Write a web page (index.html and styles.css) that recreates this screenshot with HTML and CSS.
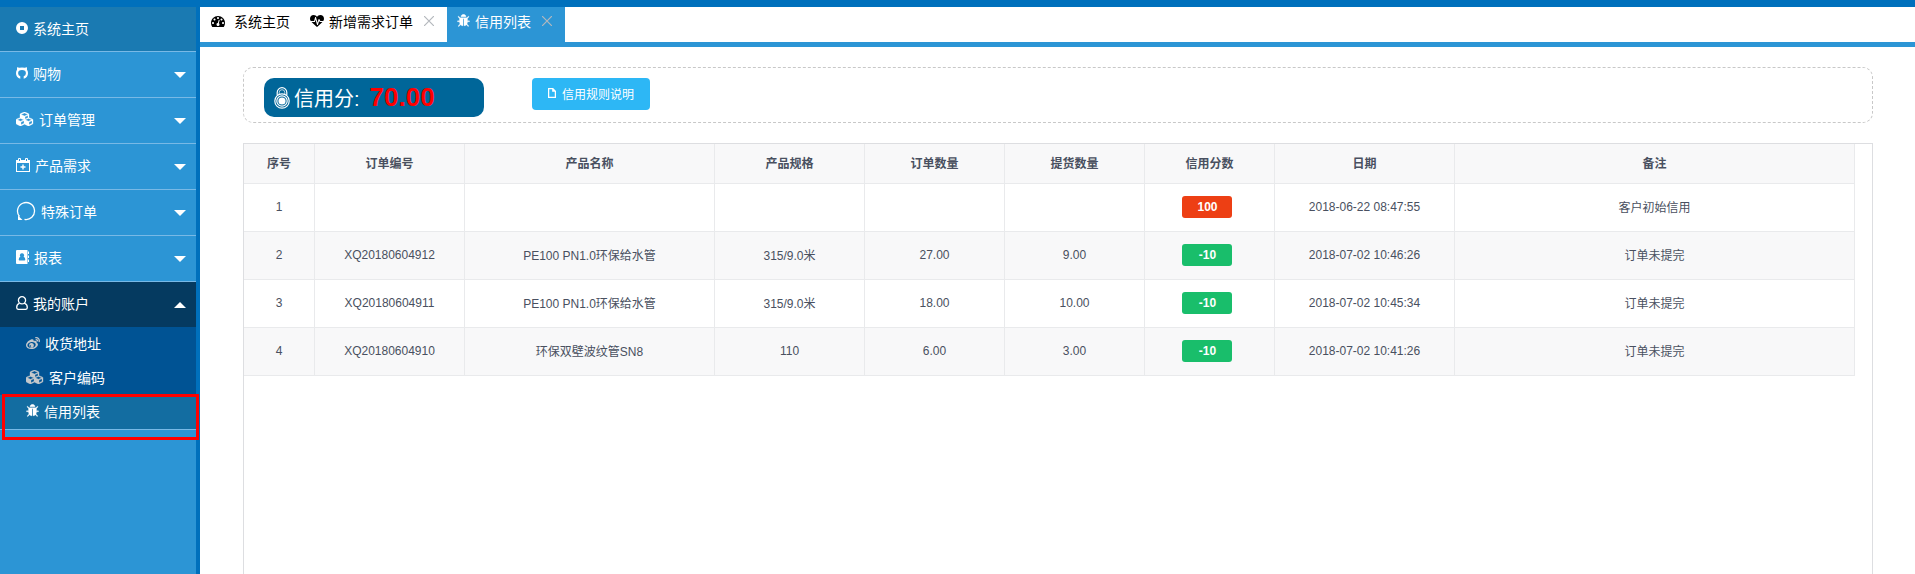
FILE: index.html
```html
<!DOCTYPE html>
<html lang="zh-CN">
<head>
<meta charset="utf-8">
<title>信用列表</title>
<link rel="stylesheet" href="styles.css">
</head>
<body>
<svg class="defs" aria-hidden="true">
  <symbol id="cubes" viewBox="0 0 2304 1792"><path class="heavy" d="M640 1632l384-192v-314l-384 164v342zm-64-454l404-173-404-173-404 173zm1088 454l384-192v-314l-384 164v342zm-64-454l404-173-404-173-404 173zm-448-293l384-165v-266l-384 164v267zm-64-379l441-189-441-189-441 189zm1088 518v416q0 36-19 67t-52 47l-448 224q-25 14-57 14t-57-14l-448-224q-5-2-7-4-2 2-7 4l-448 224q-25 14-57 14t-57-14l-448-224q-33-16-52-47t-19-67v-416q0-38 21.5-70t56.5-48l434-186v-400q0-38 21.5-70t56.5-48l448-192q23-10 50-10t50 10l448 192q35 16 56.5 48t21.5 70v400l434 186q36 16 57 48t21 70z"/></symbol>
  <symbol id="bug" viewBox="64 64 1664 1728"><path class="heavy" d="M1696 960q0 26-19 45t-45 19h-224q0 171-67 290l208 209q19 19 19 45t-19 45q-18 19-45 19t-45-19l-198-197q-5 5-15 13t-42 28.5-65 36.5-82 29-97 13v-896h-128v896q-51 0-101.5-13.5t-87-33-66-39-43.5-32.5l-15-14-183 207q-20 21-48 21-24 0-43-16-19-18-20.500-44.500t15.500-46.500l202-227q-58-114-58-274h-224q-26 0-45-19t-19-45 19-45 45-19h224v-294l-173-173q-19-19-19-45t19-45 45-19 45 19l173 173h844l173-173q19-19 45-19t45 19 19 45-19 45l-173 173v294h224q26 0 45 19t19 45zm-480-576h-640q0-133 93.500-226.500t226.500-93.500 226.500 93.500 93.500 226.500z"/></symbol>
</svg>
<div class="app">
  <nav class="sidebar">
    <ul class="menu">
      <li class="menu-row"><a class="menu-item current" href="#">
        <svg class="i12" viewBox="0 0 12 12"><path fill-rule="evenodd" d="M6 0a6 6 0 1 0 0 12A6 6 0 0 0 6 0zM4 4h4v4H4z"/></svg>系统主页</a></li>
      <li class="menu-row"><button class="menu-item">
        <svg class="i12" viewBox="0 0 12 12"><path d="M1 .2 3.300.8Q6 0 8.700.8L11 .2V2.700A6 6 0 0 1 12 6 6 6 0 0 1 7.700 11.800V9.300Q9.900 8.500 9.900 6.200 9.900 2.900 6 2.900T2.100 6.200Q2.100 8.500 4.300 9.300V11.800A6 6 0 0 1 0 6 6 6 0 0 1 1 2.700z"/></svg>购物<span class="caret"></span></button></li>
      <li class="menu-row"><button class="menu-item"><svg class="i18"><use href="#cubes"/></svg>订单管理<span class="caret"></span></button></li>
      <li class="menu-row"><button class="menu-item">
        <svg class="i14" viewBox="0 0 14 14"><path fill-rule="evenodd" d="M0 2h2V1q0-1 1-1h1q1 0 1 1v1h4V1q0-1 1-1h1q1 0 1 1v1h2v12H0zM1 5v8h12V5zM3 1v2h1V1zm7 0v2h1V1zM6.300 6.500h1.400V8.300h1.800v1.400H7.700v1.800H6.300V9.700H4.500V8.300h1.800z"/></svg>产品需求<span class="caret"></span></button></li>
      <li class="menu-row"><button class="menu-item">
        <svg class="i20" viewBox="0 0 20 20"><path class="line" d="M8.500 18.400A8.500 8.500 0 1 0 3.500 15.500"/><path d="M2 14.500 6.500 19H2z"/></svg>特殊订单<span class="caret"></span></button></li>
      <li class="menu-row"><button class="menu-item">
        <svg class="i13" viewBox="0 0 13 14"><path fill-rule="evenodd" d="M1 0h10.500v14H1Q0 14 0 13V1Q0 0 1 0zM6 3.200a2.100 2.100 0 0 0-1.600 3.500Q2.700 7.200 2.700 9.500q0 .9.800.9h5q.8 0 .8-.9 0-2.300-1.700-2.800A2.100 2.100 0 0 0 6 3.200zM12 1.500h1.500V4H12zm0 4h1.500V8H12zm0 4h1.500V12H12z"/></svg>报表<span class="caret"></span></button></li>
      <li class="menu-row open"><button class="menu-item dark" aria-expanded="true">
        <svg class="i12" viewBox="0 0 12 14"><path class="line" d="M3.300 7.300C1.400 7.900.7 9.500.7 11.400c0 1.300.8 2 2 2h6.600c1.200 0 2-.7 2-2 0-1.900-.7-3.500-2.600-4.100M6 .7a3.500 3.500 0 1 1 0 7.200A3.500 3.500 0 0 1 6 .7z"/></svg>我的账户<span class="caret up"></span></button>
        <ul class="submenu">
          <li><a class="sub-item" href="#"><svg class="i14" viewBox="0 0 14 12"><path fill-rule="evenodd" d="M5 2.500C7 1.600 8 2.600 7.600 4c2-.8 3.700-.1 3 1.700 1.500.5 1.800 2 .7 3.500C9.800 11.200 7.600 12 5.400 12 2 12 0 10.400 0 8.300 0 6 2.700 3.400 5 2.500zM5.400 5C3 5.200 1.300 6.700 1.400 8.400s2 2.700 4.400 2.500 4-1.800 3.900-3.500S7.800 4.800 5.400 5zM5 6a2.400 2.400 0 1 1-.1 4.700A2.400 2.400 0 0 1 5 6zm-.7 2.200a.8.8 0 1 0 .1 1.600.8.8 0 0 0-.1-1.600z"/><path class="line" d="M9.300.7c2.700-.5 4.600 1.600 3.800 4.300M9.700 2.600c1.300-.2 2 .6 1.700 1.800"/></svg>收货地址</a></li>
          <li><a class="sub-item" href="#"><svg class="i18"><use href="#cubes"/></svg>客户编码</a></li>
          <li class="marked"><a class="sub-item selected" href="#"><svg class="i13"><use href="#bug"/></svg>信用列表</a></li>
        </ul>
      </li>
    </ul>
  </nav>
  <main class="main">
    <div class="tabs">
      <div class="tab home"><svg class="i14" viewBox="0 128 1792 1536"><path d="M384 1152q0-53-37.500-90.500t-90.500-37.500-90.500 37.500-37.500 90.500 37.500 90.500 90.500 37.500 90.500-37.500 37.500-90.500zm192-448q0-53-37.500-90.500t-90.500-37.500-90.500 37.500-37.500 90.500 37.500 90.500 90.500 37.500 90.500-37.500 37.500-90.500zm428 481l101-382q6-26-7.500-48.500t-38.500-29.500-48 6.500-30 39.500l-101 382q-60 5-107 43.500t-63 98.500q-20 77 20 146t117 89 146-20 89-117q16-60-6-117t-72-91zm660-33q0-53-37.500-90.500t-90.500-37.500-90.500 37.500-37.500 90.500 37.500 90.500 90.500 37.500 90.500-37.500 37.500-90.500zm-640-640q0-53-37.500-90.500t-90.500-37.500-90.500 37.500-37.500 90.500 37.500 90.500 90.500 37.500 90.500-37.500 37.500-90.500zm448 192q0-53-37.500-90.500t-90.500-37.500-90.500 37.500-37.500 90.500 37.500 90.500 90.500 37.500 90.500-37.500 37.500-90.500zm320 448q0 261-141 483-19 29-54 29h-1402q-35 0-54-29-141-221-141-483 0-182 71-348t191-286 286-191 348-71 348 71 286 191 191 286 71 348z"/></svg><a href="#">系统主页</a></div>
      <div class="tab"><svg class="i14" viewBox="0 0 1792 1792"><path d="M1280 1024h305q-5 6-10 10.500t-9 7.500l-3 4-623 600q-18 18-44 18t-44-18l-624-602q-5-2-21-20h369q22 0 39.500-13.500t22.500-34.500l70-281 190 667q6 20 23 33t39 13q21 0 38-13t23-33l146-485 56 112q18 35 57 35zm512-428q0 145-103 300h-369l-111-221q-8-17-25.500-27t-36.500-8q-45 5-56 46l-129 430-196-686q-6-20-23.500-33t-39.500-13-39 13.500-22 34.500l-116 464h-423q-103-155-103-300 0-220 127-344t351-124q62 0 126.500 21.500t120 58 95.500 68.500 76 68q36-36 76-68t95.500-68.500 120-58 126.500-21.500q224 0 351 124t127 344z"/></svg><a href="#">新增需求订单</a><button class="close" aria-label="关闭"><svg viewBox="0 0 10 10"><path class="thin" d="M0 0l10 10M10 0L0 10"/></svg></button></div>
      <div class="tab active"><svg class="i13"><use href="#bug"/></svg><a href="#">信用列表</a><button class="close" aria-label="关闭"><svg viewBox="0 0 10 10"><path class="thin" d="M0 0l10 10M10 0L0 10"/></svg></button></div>
    </div>
    <div class="page">
      <section class="summary">
        <div class="score">
          <svg class="lock" viewBox="0 0 16 22"><path class="ring" d="M3.200 8V5.500a4.800 4.800 0 0 1 9.600 0V8"/><path class="ring faint" d="M5.200 7V5.500a2.800 2.800 0 0 1 5.600 0V7"/><circle class="ring" cx="8" cy="14" r="7.200"/><circle class="ring" cx="8" cy="14" r="5.200"/><circle cx="8" cy="14" r="3.600"/></svg>
          <span>信用分:</span><strong>70.00</strong>
        </div>
        <button class="rules"><svg viewBox="0 0 8 10"><path class="line" d="M.6.6h4.200l2.600 2.600v6.200H.6zM4.800.6v2.600h2.600"/></svg>信用规则说明</button>
      </section>
      <section class="panel">
        <table>
          <colgroup><col class="w71"><col class="w150"><col class="w250"><col class="w150"><col class="w140"><col class="w140"><col class="w130"><col class="w180"><col></colgroup>
          <thead><tr><th>序号</th><th>订单编号</th><th>产品名称</th><th>产品规格</th><th>订单数量</th><th>提货数量</th><th>信用分数</th><th>日期</th><th>备注</th></tr></thead>
          <tbody>
            <tr><td>1</td><td></td><td></td><td></td><td></td><td></td><td><span class="badge red">100</span></td><td>2018-06-22 08:47:55</td><td>客户初始信用</td></tr>
            <tr><td>2</td><td>XQ20180604912</td><td>PE100 PN1.0环保给水管</td><td>315/9.0米</td><td>27.00</td><td>9.00</td><td><span class="badge">-10</span></td><td>2018-07-02 10:46:26</td><td>订单未提完</td></tr>
            <tr><td>3</td><td>XQ20180604911</td><td>PE100 PN1.0环保给水管</td><td>315/9.0米</td><td>18.00</td><td>10.00</td><td><span class="badge">-10</span></td><td>2018-07-02 10:45:34</td><td>订单未提完</td></tr>
            <tr><td>4</td><td>XQ20180604910</td><td>环保双壁波纹管SN8</td><td>110</td><td>6.00</td><td>3.00</td><td><span class="badge">-10</span></td><td>2018-07-02 10:41:26</td><td>订单未提完</td></tr>
          </tbody>
        </table>
      </section>
    </div>
  </main>
</div>
</body>
</html>
```
FILE: styles.css
```css
* { box-sizing: border-box; }
body {
  margin: 0;
  font-family: "Liberation Sans", "Noto Sans CJK SC", sans-serif;
  font-size: 14px;
  color: #495060;
  background: #fff;
}
ul { list-style: none; margin: 0; padding: 0; }
a { color: inherit; text-decoration: none; }
button { font: inherit; color: inherit; border: 0; background: none; padding: 0; cursor: pointer; }
svg { fill: currentColor; flex: none; display: block; }
.defs { position: absolute; width: 0; height: 0; }
.line { fill: none; stroke: currentColor; stroke-width: 1.3; }
.thin { fill: none; stroke: #b4b8bd; stroke-width: 1.2; }
.heavy { stroke: currentColor; stroke-width: 40; }
.i12 { width: 12px; height: 14px; }
.i13 { width: 13px; height: 14px; }
.i14 { width: 14px; height: 14px; }
.i18 { width: 18px; height: 14px; }
.i20 { width: 20px; height: 20px; }

.app { display: flex; min-height: 100vh; border-top: 7px solid #0070bc; }
.sidebar { flex: none; width: 200px; background: #2c95d5; border-right: 4px solid #0070bc; color: #fff; }
.menu-row { border-bottom: 1px solid #78b9e6; }
.menu-item {
  display: flex;
  align-items: center;
  gap: 5px;
  width: 100%;
  height: 45px;
  padding: 0 10px 3px 16px;
}
.menu-item.current { height: 44px; background: #1a7ab2; }
.menu-item.dark { background: #053a60; }
.caret { margin: 3px 0 0 auto; border: 6px solid transparent; border-top-color: #fff; border-bottom: 0; }
.caret.up { border-top: 0; border-bottom: 6px solid #fff; }
.submenu { background: #005394; }
.sub-item { display: flex; align-items: center; gap: 5px; height: 34px; padding: 0 0 2px 26px; }
.sub-item svg { color: #c4c8cc; }
.sub-item.selected, .sub-item.selected svg { color: #fff; }
.sub-item.selected { background: #136da1; }
.marked { position: relative; }
.marked::after {
  content: "";
  position: absolute;
  inset: -1px -3px -11px 2px;
  border: 3px solid #f00;
}

.main { flex: 1; min-width: 0; display: flex; flex-direction: column; }
.tabs { display: flex; height: 40px; border-bottom: 5px solid #2c95d5; color: #000; }
.tab { display: flex; align-items: center; gap: 5px; padding: 0 13px 7px 10px; }
.tab.home { gap: 9px; padding: 0 10px 7px 11px; }
.tab.active { background: #2c95d5; color: #fff; padding: 0 13px 7px 10px; }
.close { margin-left: 6px; }
.close svg { width: 10px; height: 10px; }

.page { flex: 1; display: flex; flex-direction: column; gap: 20px; padding: 20px 42px 0 43px; }
.summary {
  display: flex;
  align-items: flex-start;
  gap: 48px;
  padding: 10px 20px 5px;
  border: 1px dashed #c8c8c8;
  border-radius: 10px;
}
.score {
  display: flex;
  align-items: center;
  width: 220px;
  height: 39px;
  padding-left: 10px;
  border-radius: 10px;
  background: #006699;
  color: #fff;
  font-size: 20px;
}
.lock { width: 16px; height: 22px; margin-right: 4px; }
.ring { fill: none; stroke: currentColor; stroke-width: 1.2; }
.faint { stroke-width: 1; opacity: .7; }
.score strong { margin-left: 10px; color: #f00; font-size: 26px; }
.rules {
  display: flex;
  align-items: center;
  gap: 6px;
  height: 32px;
  padding: 0 16px 2px;
  border-radius: 4px;
  background: #2db7f5;
  color: #fff;
  font-size: 12px;
}
.rules svg { width: 8px; height: 10px; }

.panel { flex: 1; padding-right: 17px; border: 1px solid #dddee1; border-bottom: 0; }
table { width: 100%; table-layout: fixed; border-collapse: separate; border-spacing: 0; font-size: 12px; }
th, td { padding: 0 0 2px; text-align: center; border-right: 1px solid #e9eaec; border-bottom: 1px solid #e9eaec; }
th { height: 40px; background: #f8f8f9; }
td { height: 48px; }
tbody tr:nth-child(even) { background: #f8f8f9; }
.w71 { width: 71px; }
.w130 { width: 130px; }
.w140 { width: 140px; }
.w150 { width: 150px; }
.w180 { width: 180px; }
.w250 { width: 250px; }
.badge {
  display: inline-block;
  width: 50px;
  line-height: 22px;
  margin-right: 6px;
  padding-left: 2px;
  border-radius: 3px;
  background: #19be6b;
  color: #fff;
  font-weight: bold;
}
.badge.red { background: #ed3f14; }
```
